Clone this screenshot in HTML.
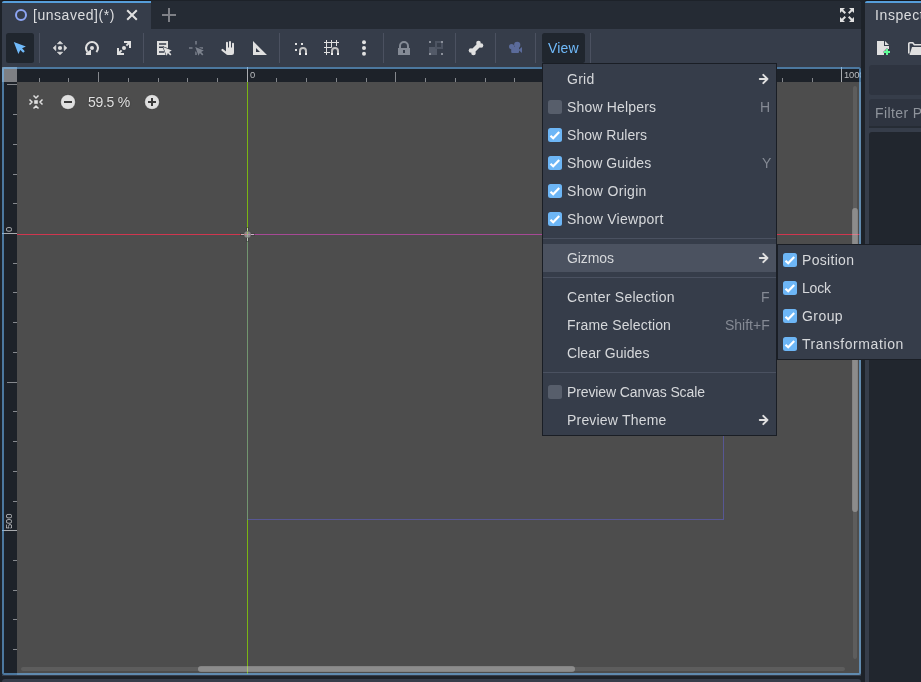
<!DOCTYPE html>
<html>
<head>
<meta charset="utf-8">
<title>Godot Editor - View Menu</title>
<style>
*{box-sizing:border-box;margin:0;padding:0}
html,body{width:921px;height:682px;overflow:hidden;background:#1d2229}
.t,.lb,.sc,.rl{will-change:transform}
body{position:relative;font-family:"Liberation Sans",sans-serif;font-size:14px;color:#dcdddf;line-height:16px}
.abs{position:absolute}
.t{position:absolute;white-space:pre;line-height:16px;height:16px}
svg{position:absolute;overflow:visible}
.ic{width:16px;height:16px}
.sep{position:absolute;width:1px;top:33px;height:30px;background:#4b5160}
/* center panel */
#center{left:2px;top:1px;width:859px;height:675px;background:#363d4a;border-radius:3px 3px 0 0}
#tabbar{left:2px;top:1px;width:859px;height:28px;background:#252b34;border-radius:3px 3px 0 0}
#tab{left:2px;top:1px;width:149px;height:28px;background:#363d4a;border-top:2px solid #569eda;border-radius:2px 0 0 0}
.btnp{position:absolute;background:#20262e;border-radius:2.5px}
/* viewport */
#canvas{left:2px;top:67px;width:859px;height:608px;background:#4d4d4d;border-radius:2px}
#rulh{left:2px;top:67px;width:859px;height:15px;background:#1d2229}
#rulv{left:2px;top:67px;width:15px;height:608px;background:#1d2229}
#corner{left:2px;top:67px;width:15px;height:15px;background:#7e8084}
#focus{left:2px;top:67px;width:859px;height:608px;border:2px solid rgba(112,186,250,.57);border-radius:2px}
.tk{position:absolute;background:#7e8186}
.rl{position:absolute;letter-spacing:-.1px;font-size:9.4px;line-height:10px;color:#babcbf;white-space:pre}
/* popup */
.pop{position:absolute;background:#363d4a;border:1px solid #1a1e25}
.mi{position:absolute;left:0;right:0;height:28px}
.mi .lb{position:absolute;left:24px;top:6px;line-height:16px;white-space:pre;color:#d6d8db}
.mi .sc{position:absolute;right:6px;top:6px;line-height:16px;white-space:pre;color:#858a94}
.msep{position:absolute;left:0;right:0;height:1px;background:#4a5160}
.cb{position:absolute;width:14px;height:14px;border-radius:2.5px;top:7px;left:5px;background:#575e6b}
.cb.on{background:#6db6f6}
.cb svg{left:0;top:0;width:14px;height:14px}
.arr{left:213px;top:6px}
</style>
</head>
<body>
<!-- CENTER PANEL -->
<div class="abs" id="center"></div>
<div class="abs" id="tabbar"></div>
<div class="abs" id="tab"></div>
<div class="abs" style="left:2px;top:0;width:149px;height:1px;background:#15181d"></div>
<div class="abs" style="left:865px;top:0;width:56px;height:1px;background:#15181d"></div>
<svg class="ic" style="left:13px;top:7px" viewBox="0 0 16 16"><circle cx="8" cy="8" r="5" fill="none" stroke="#8da5f3" stroke-width="2"/></svg>
<span class="t" id="tabtxt" style="left:32.5px;top:7px;color:#dcdddf;letter-spacing:.53px">[unsaved](*)</span>
<svg class="ic" style="left:124px;top:7px" viewBox="0 0 16 16"><path d="M3.2 3.2l9.6 9.6M12.8 3.2l-9.6 9.6" stroke="#e0e0e0" stroke-width="2" stroke-linecap="butt" fill="none"/></svg>
<svg class="ic" style="left:161px;top:7px" viewBox="0 0 16 16"><path d="M8 1v14M1 8h14" stroke="#7e8086" stroke-width="2" fill="none"/></svg>
<svg class="ic" id="distfree" style="left:839px;top:7px" viewBox="0 0 16 16"><path fill="#e0e0e0" d="M1 1v5l1.8-1.8L5.6 7 7 5.6 4.2 2.8 6 1zM10 1l1.8 1.8L9 5.6 10.4 7l2.8-2.8L15 6V1zM5.6 9L2.8 11.8 1 10v5h5l-1.8-1.8L7 10.4zM10.4 9L9 10.4l2.800 2.800L10 15h5v-5l-1.800 1.800z"/></svg>

<!-- TOOLBAR -->
<div class="btnp" style="left:6px;top:33px;width:28px;height:30px"></div>
<div class="sep" style="left:39px"></div>
<div class="sep" style="left:143px"></div>
<div class="sep" style="left:279px"></div>
<div class="sep" style="left:383px"></div>
<div class="sep" style="left:455px"></div>
<div class="sep" style="left:495px"></div>
<div class="sep" style="left:535px"></div>
<div class="sep" style="left:590px"></div>
<div class="btnp" style="left:542px;top:33px;width:43px;height:30px"></div>
<span class="t" id="viewtxt" style="left:547.5px;top:40px;color:#70bafa;letter-spacing:.15px">View</span>
<!--ICONS-->
<svg class="ic" style="left:12px;top:40px" viewBox="0 0 16 16"><path d="M1.800 2L13.900 6.400 10.100 8.300 12.800 11.200 11.200 12.800 8.300 10.100 6.400 13.900Z" fill="#70bafa"/></svg>
<svg class="ic" style="left:52px;top:40px" viewBox="0 0 16 16"><g fill="#e0e0e0" stroke="#e0e0e0" stroke-width=".7" stroke-linejoin="round"><path d="M8 1.200L10.600 3.800H5.400Z"/><path d="M8 14.800L10.600 12.200H5.400Z"/><path d="M1.200 8L3.800 5.400V10.600Z"/><path d="M14.800 8L12.200 5.400V10.600Z"/></g><circle cx="8" cy="8" r="2.100" fill="#e0e0e0"/></svg>
<svg class="ic" style="left:84px;top:40px" viewBox="0 0 16 16"><path d="M12.400 12.100A6 6 0 1 0 3.500 12" fill="none" stroke="#e0e0e0" stroke-width="2.100"/><circle cx="8" cy="8" r="2" fill="#e0e0e0"/><path d="M1.900 13.200L6 10.100H7V15H1.900Z" fill="#e0e0e0"/></svg>
<svg class="ic" style="left:116px;top:40px" viewBox="0 0 16 16"><g fill="#e0e0e0"><path d="M8 1h7v7h-2V3H8z"/><path d="M1 8v7h7v-2H3V8z"/><circle cx="8" cy="8" r="2"/></g><path d="M14 2L10.400 5.600M2 14L5.600 10.400" stroke="#e0e0e0" stroke-width="2" fill="none"/></svg>
<svg class="ic" style="left:156px;top:40px" viewBox="0 0 16 16"><path d="M1 1h11v14H1z" fill="#e0e0e0"/><path d="M3 3.300h7.200v1.400H3zM3 6.500h5v1.400H3zM3 11.300h5v1.400H3z" fill="#363d4a"/><path d="M7.300 7.100L15.800 10.400 13.100 11.900 15.400 14.200 14.200 15.400 11.900 13.100 10.500 15.800Z" fill="#e0e0e0" stroke="#363d4a" stroke-width="1.200" stroke-linejoin="round" paint-order="stroke"/></svg>
<svg class="ic" style="left:188px;top:40px" viewBox="0 0 16 16"><path d="M7 1h2v3.500H7zM1 7h3.500v2H1zM11.500 7H15v2h-3.500zM7 11.500h2V15H7z" fill="#686e7a"/><path d="M7.300 7.100L15.800 10.400 13.100 11.900 15.400 14.200 14.200 15.400 11.900 13.100 10.500 15.800Z" fill="#7c828d" stroke="#363d4a" stroke-width="1.200" stroke-linejoin="round" paint-order="stroke"/></svg>
<svg class="ic" style="left:220px;top:40px" viewBox="0 0 16 16"><path d="M6 8.500V2.800a1 1 0 0 1 2 0V7.500h1V1.900a1 1 0 0 1 2 0V7.500h1V3.700a1 1 0 0 1 2 0V12.500a2.500 2.500 0 0 1-2.500 2.500H7.800a2.500 2.500 0 0 1-1.900-.9L1.700 10.800a1.100 1.100 0 0 1 1.600-1.600L6 11.500z" fill="#e0e0e0"/></svg>
<svg class="ic" style="left:252px;top:40px" viewBox="0 0 16 16"><path d="M1 1V15H15ZM4 8L8 12H4Z" fill="#e0e0e0" fill-rule="evenodd"/></svg>
<svg class="ic" style="left:292px;top:40px" viewBox="0 0 16 16"><path d="M3 3h2v2H3zM9 3h2v2H9zM3 9h2v2H3z" fill="#e0e0e0"/><path d="M7 15V11a4 4 0 0 1 8 0v4h-2V11a2 2 0 0 0-4 0v4z" fill="#c2c2c2"/><path d="M7 13h2v2H7zM13 13h2v2h-2z" fill="#f2f2f2"/></svg>
<svg class="ic" style="left:324px;top:40px" viewBox="0 0 16 16"><path d="M2.500 0V15M7.500 0V7.500M12.500 0V6M0 2.500H15M0 7.500H7.500M0 12.500H6" stroke="#e0e0e0" stroke-width="1" fill="none"/><path d="M7 15V11a4 4 0 0 1 8 0v4h-2V11a2 2 0 0 0-4 0v4z" fill="#c2c2c2"/><path d="M7 13h2v2H7zM13 13h2v2h-2z" fill="#f2f2f2"/></svg>
<svg class="ic" style="left:356px;top:40px" viewBox="0 0 16 16"><g fill="#e0e0e0"><circle cx="8" cy="2.200" r="2"/><circle cx="8" cy="8" r="2"/><circle cx="8" cy="13.800" r="2"/></g></svg>
<svg class="ic" style="left:396px;top:40px" viewBox="0 0 16 16"><path d="M2 8h1V6a5 5 0 0 1 10 0v2h1v7H2zM5 8h6V6a3 3 0 0 0-6 0zM7 10v3h2v-3z" fill="#848a95" fill-rule="evenodd"/></svg>
<svg class="ic" style="left:428px;top:40px" viewBox="0 0 16 16"><path d="M1 7h8v8H1z" fill="#535a68"/><path d="M8 2h6v6H8z" fill="none" stroke="#4d5462" stroke-width="2"/><path d="M1 1h2v2H1zM13 1h2v2h-2zM1 13h2v2H1zM13 13h2v2h-2z" fill="#8b909a"/></svg>
<svg class="ic" style="left:468px;top:40px" viewBox="0 0 16 16"><path d="M4.500 11.500L11.500 4.500" stroke="#e0e0e0" stroke-width="4.400" fill="none"/><g fill="#e0e0e0"><circle cx="10.500" cy="3" r="2.300"/><circle cx="13" cy="5.500" r="2.300"/><circle cx="3" cy="10.500" r="2.300"/><circle cx="5.500" cy="13" r="2.300"/></g></svg>
<svg class="ic" style="left:508px;top:40px" viewBox="0 0 16 16"><g fill="#5b6b9a"><circle cx="3.600" cy="6.600" r="2.600"/><circle cx="9.200" cy="4.900" r="3.100"/><rect x="3.200" y="7" width="7.800" height="6" rx="1"/><path d="M14 7V13L10.500 10Z"/></g></svg>

<!-- VIEWPORT -->
<div class="abs" id="canvas"></div>
<!--CANVASCONTENT-->
<div class="abs" style="left:17px;top:234px;width:843px;height:1px;background:#d0364f"></div>
<div class="abs" style="left:247px;top:82px;width:1px;height:592px;background:#7bb512"></div>
<div class="abs" style="left:247px;top:234px;width:477px;height:286px;border:1px solid rgba(102,102,255,.4)"></div>
<svg style="left:239px;top:226px;width:17px;height:17px" viewBox="0 0 17 17">
<g fill="rgba(40,40,40,.28)"><rect x="1" y="7" width="5" height="3"/><rect x="11" y="7" width="5" height="3"/><rect x="7" y="1" width="3" height="5"/><rect x="7" y="11" width="3" height="5"/></g>
<circle cx="8.5" cy="8.5" r="3.600" fill="rgba(200,200,200,.5)" stroke="rgba(40,40,40,.25)" stroke-width="1"/>
<g fill="rgba(255,255,255,.6)"><rect x="2" y="8" width="3" height="1"/><rect x="12" y="8" width="3" height="1"/><rect x="8" y="2" width="1" height="3"/><rect x="8" y="12" width="1" height="3"/></g>
</svg>
<div class="abs" style="left:853px;top:86px;width:4px;height:573px;background:rgba(255,255,255,.09);border-radius:2px"></div>
<div class="abs" style="left:852px;top:208px;width:6px;height:304px;background:rgba(210,210,210,.41);border-radius:3px"></div>
<div class="abs" style="left:21px;top:667px;width:824px;height:4px;background:rgba(255,255,255,.09);border-radius:2px"></div>
<div class="abs" style="left:198px;top:666px;width:377px;height:6px;background:rgba(210,210,210,.41);border-radius:3px"></div>
<svg class="ic" style="left:28px;top:94px" viewBox="0 0 16 16"><path fill="#e0e0e0" d="M6.200 6.200h3.600v3.600H6.200z"/><path d="M5.500 1.500L8 4l2.500-2.500M5.500 14.500L8 12l2.500 2.500M1.500 5.500L4 8l-2.500 2.500M14.500 5.500L12 8l2.500 2.500" stroke="#e0e0e0" stroke-width="1.500" fill="none"/></svg>
<svg class="ic" style="left:60px;top:94px" viewBox="0 0 16 16"><circle cx="8" cy="8" r="7.300" fill="#e0e0e0" stroke="rgba(0,0,0,.22)" stroke-width="1"/><path d="M4 8h8" stroke="#3a3a3a" stroke-width="2"/></svg>
<span class="t" id="zoomtxt" style="left:87.700px;top:94px;color:#e0e0e0;letter-spacing:-.3px;text-shadow:0 0 1.5px rgba(0,0,0,.55)">59.5 %</span>
<svg class="ic" style="left:144px;top:94px" viewBox="0 0 16 16"><circle cx="8" cy="8" r="7.300" fill="#e0e0e0" stroke="rgba(0,0,0,.22)" stroke-width="1"/><path d="M4 8h8M8 4v8" stroke="#3a3a3a" stroke-width="2"/></svg>
<div class="abs" id="rulh"></div>
<div class="abs" id="rulv"></div>
<!--RULERS-->
<div class="abs" style="left:0;top:0;width:861px;height:675px;overflow:hidden">
<div class="tk" style="left:39px;top:78px;width:1px;height:4px;background:#85888d"></div>
<div class="tk" style="left:68px;top:78px;width:1px;height:4px;background:#85888d"></div>
<div class="tk" style="left:98px;top:72px;width:1px;height:10px;background:#85888d"></div>
<div class="tk" style="left:128px;top:78px;width:1px;height:4px;background:#85888d"></div>
<div class="tk" style="left:158px;top:78px;width:1px;height:4px;background:#85888d"></div>
<div class="tk" style="left:187px;top:78px;width:1px;height:4px;background:#85888d"></div>
<div class="tk" style="left:217px;top:78px;width:1px;height:4px;background:#85888d"></div>
<div class="tk" style="left:247px;top:67px;width:1px;height:15px;background:#a9acb0"></div>
<span class="rl" style="left:249.6px;top:70.300px">0</span>
<div class="tk" style="left:276px;top:78px;width:1px;height:4px;background:#85888d"></div>
<div class="tk" style="left:306px;top:78px;width:1px;height:4px;background:#85888d"></div>
<div class="tk" style="left:336px;top:78px;width:1px;height:4px;background:#85888d"></div>
<div class="tk" style="left:366px;top:78px;width:1px;height:4px;background:#85888d"></div>
<div class="tk" style="left:395px;top:72px;width:1px;height:10px;background:#85888d"></div>
<div class="tk" style="left:425px;top:78px;width:1px;height:4px;background:#85888d"></div>
<div class="tk" style="left:455px;top:78px;width:1px;height:4px;background:#85888d"></div>
<div class="tk" style="left:485px;top:78px;width:1px;height:4px;background:#85888d"></div>
<div class="tk" style="left:514px;top:78px;width:1px;height:4px;background:#85888d"></div>
<div class="tk" style="left:544px;top:67px;width:1px;height:15px;background:#a9acb0"></div>
<span class="rl" style="left:546.6px;top:70.300px">500</span>
<div class="tk" style="left:574px;top:78px;width:1px;height:4px;background:#85888d"></div>
<div class="tk" style="left:603px;top:78px;width:1px;height:4px;background:#85888d"></div>
<div class="tk" style="left:633px;top:78px;width:1px;height:4px;background:#85888d"></div>
<div class="tk" style="left:663px;top:78px;width:1px;height:4px;background:#85888d"></div>
<div class="tk" style="left:693px;top:72px;width:1px;height:10px;background:#85888d"></div>
<div class="tk" style="left:722px;top:78px;width:1px;height:4px;background:#85888d"></div>
<div class="tk" style="left:752px;top:78px;width:1px;height:4px;background:#85888d"></div>
<div class="tk" style="left:782px;top:78px;width:1px;height:4px;background:#85888d"></div>
<div class="tk" style="left:812px;top:78px;width:1px;height:4px;background:#85888d"></div>
<div class="tk" style="left:841px;top:67px;width:1px;height:15px;background:#a9acb0"></div>
<span class="rl" style="left:843.6px;top:70.300px">1000</span>
<div class="tk" style="left:7px;top:84px;width:10px;height:1px;background:#85888d"></div>
<div class="tk" style="left:13px;top:114px;width:4px;height:1px;background:#85888d"></div>
<div class="tk" style="left:13px;top:144px;width:4px;height:1px;background:#85888d"></div>
<div class="tk" style="left:13px;top:174px;width:4px;height:1px;background:#85888d"></div>
<div class="tk" style="left:13px;top:203px;width:4px;height:1px;background:#85888d"></div>
<div class="tk" style="left:2px;top:233px;width:15px;height:1px;background:#a9acb0"></div>
<span class="rl" style="left:4px;top:232px;transform-origin:0 0;transform:rotate(-90deg)">0</span>
<div class="tk" style="left:13px;top:263px;width:4px;height:1px;background:#85888d"></div>
<div class="tk" style="left:13px;top:292px;width:4px;height:1px;background:#85888d"></div>
<div class="tk" style="left:13px;top:322px;width:4px;height:1px;background:#85888d"></div>
<div class="tk" style="left:13px;top:352px;width:4px;height:1px;background:#85888d"></div>
<div class="tk" style="left:7px;top:382px;width:10px;height:1px;background:#85888d"></div>
<div class="tk" style="left:13px;top:411px;width:4px;height:1px;background:#85888d"></div>
<div class="tk" style="left:13px;top:441px;width:4px;height:1px;background:#85888d"></div>
<div class="tk" style="left:13px;top:471px;width:4px;height:1px;background:#85888d"></div>
<div class="tk" style="left:13px;top:501px;width:4px;height:1px;background:#85888d"></div>
<div class="tk" style="left:2px;top:530px;width:15px;height:1px;background:#a9acb0"></div>
<span class="rl" style="left:4px;top:529px;transform-origin:0 0;transform:rotate(-90deg)">500</span>
<div class="tk" style="left:13px;top:560px;width:4px;height:1px;background:#85888d"></div>
<div class="tk" style="left:13px;top:590px;width:4px;height:1px;background:#85888d"></div>
<div class="tk" style="left:13px;top:619px;width:4px;height:1px;background:#85888d"></div>
<div class="tk" style="left:13px;top:649px;width:4px;height:1px;background:#85888d"></div>
</div>
<div class="abs" id="corner"></div>
<div class="abs" id="focus"></div>

<!-- BOTTOM PANEL -->
<div class="abs" style="left:2px;top:679px;width:859px;height:10px;background:#363d4a;border-radius:3px 3px 0 0"></div>

<!-- RIGHT PANEL -->
<div class="abs" style="left:865px;top:1px;width:70px;height:690px;background:#363d4a;border-top:2px solid #569eda;border-radius:2px 0 0 0"></div>
<span class="t" id="insptxt" style="letter-spacing:.6px;left:875.3px;top:7px;color:#dcdddf">Inspector</span>
<div class="abs" style="left:869px;top:65px;width:70px;height:30px;background:#2e3440;border-radius:3px"></div>
<div class="abs" style="left:869px;top:99px;width:70px;height:29px;background:#2e3440;border-bottom:2px solid #262c35;border-radius:3px 3px 0 0"></div>
<span class="t" id="filttxt" style="letter-spacing:.4px;left:875.1px;top:105px;color:#8f949c">Filter Properties</span>
<div class="abs" style="left:869px;top:132px;width:70px;height:560px;background:#21262e;border-radius:3px"></div>
<!--RIGHTICONS-->
<svg class="ic" style="left:876px;top:40px" viewBox="0 0 16 16"><path d="M1 1H8V6H13V9H10V11H8V15H1Z" fill="#e0e0e0"/><path d="M9 1L13 5H9Z" fill="#e0e0e0"/><path d="M10 9h2v2h2v2h-2v2h-2v-2H8v-2h2z" fill="#5fff97" stroke="#363d4a" stroke-width=".6" paint-order="stroke"/></svg>
<svg class="ic" style="left:907px;top:40px" viewBox="0 0 16 16"><path d="M1.800 13.500V3.800a1 1 0 0 1 1-1H5.800l1.500 2H14" fill="none" stroke="#e0e0e0" stroke-width="1.600"/><path d="M5 7H17L15 15H2.500Z" fill="#e0e0e0"/></svg>

<!-- POPUPS -->
<!--POPUPS-->
<div class="pop" id="pop1" style="left:542px;top:63px;width:235px;height:373px">
<div class="mi" style="top:1px"><span class="lb" style="letter-spacing:0.27px">Grid</span><svg class="ic arr" viewBox="0 0 16 16"><path d="M3.800 8H11.400M7.300 3.900L11.400 8 7.300 12.100" stroke="#e0e0e0" stroke-width="2" fill="none" stroke-linecap="round" stroke-linejoin="round"/></svg></div>
<div class="mi" style="top:29px"><div class="cb"></div><span class="lb" style="letter-spacing:0.17px">Show Helpers</span><span class="sc">H</span></div>
<div class="mi" style="top:57px"><div class="cb on"><svg viewBox="0 0 14 14"><path d="M2.500 7.700l2.700 2.600 6-6.300" stroke="#fff" stroke-width="2.200" fill="none"/></svg></div><span class="lb" style="letter-spacing:0.07px">Show Rulers</span></div>
<div class="mi" style="top:85px"><div class="cb on"><svg viewBox="0 0 14 14"><path d="M2.500 7.700l2.700 2.600 6-6.300" stroke="#fff" stroke-width="2.200" fill="none"/></svg></div><span class="lb" style="letter-spacing:0.09px">Show Guides</span><span class="sc" style="right:5px">Y</span></div>
<div class="mi" style="top:113px"><div class="cb on"><svg viewBox="0 0 14 14"><path d="M2.500 7.700l2.700 2.600 6-6.300" stroke="#fff" stroke-width="2.200" fill="none"/></svg></div><span class="lb" style="letter-spacing:0.31px">Show Origin</span></div>
<div class="mi" style="top:141px"><div class="cb on"><svg viewBox="0 0 14 14"><path d="M2.500 7.700l2.700 2.600 6-6.300" stroke="#fff" stroke-width="2.200" fill="none"/></svg></div><span class="lb" style="letter-spacing:0.27px">Show Viewport</span></div>
<div class="msep" style="top:174px"></div>
<div class="mi" style="top:180px;background:#4b5260"><span class="lb" style="letter-spacing:-0.08px">Gizmos</span><svg class="ic arr" viewBox="0 0 16 16"><path d="M3.800 8H11.400M7.300 3.900L11.400 8 7.300 12.100" stroke="#e0e0e0" stroke-width="2" fill="none" stroke-linecap="round" stroke-linejoin="round"/></svg></div>
<div class="msep" style="top:213px"></div>
<div class="mi" style="top:219px"><span class="lb" style="letter-spacing:0.27px">Center Selection</span><span class="sc">F</span></div>
<div class="mi" style="top:247px"><span class="lb" style="letter-spacing:0.14px">Frame Selection</span><span class="sc">Shift+F</span></div>
<div class="mi" style="top:275px"><span class="lb" style="letter-spacing:0.07px">Clear Guides</span></div>
<div class="msep" style="top:308px"></div>
<div class="mi" style="top:314px"><div class="cb"></div><span class="lb" style="letter-spacing:-0.11px">Preview Canvas Scale</span></div>
<div class="mi" style="top:342px"><span class="lb" style="letter-spacing:0.19px">Preview Theme</span><svg class="ic arr" viewBox="0 0 16 16"><path d="M3.800 8H11.400M7.300 3.900L11.400 8 7.300 12.100" stroke="#e0e0e0" stroke-width="2" fill="none" stroke-linecap="round" stroke-linejoin="round"/></svg></div>
</div>
<div class="pop" id="pop2" style="left:777px;top:244px;width:160px;height:116px">
<div class="mi" style="top:1px"><div class="cb on"><svg viewBox="0 0 14 14"><path d="M2.500 7.700l2.700 2.600 6-6.300" stroke="#fff" stroke-width="2.200" fill="none"/></svg></div><span class="lb" style="letter-spacing:0.31px">Position</span></div>
<div class="mi" style="top:29px"><div class="cb on"><svg viewBox="0 0 14 14"><path d="M2.500 7.700l2.700 2.600 6-6.300" stroke="#fff" stroke-width="2.200" fill="none"/></svg></div><span class="lb" style="letter-spacing:-0.2px">Lock</span></div>
<div class="mi" style="top:57px"><div class="cb on"><svg viewBox="0 0 14 14"><path d="M2.500 7.700l2.700 2.600 6-6.300" stroke="#fff" stroke-width="2.200" fill="none"/></svg></div><span class="lb" style="letter-spacing:0.43px">Group</span></div>
<div class="mi" style="top:85px"><div class="cb on"><svg viewBox="0 0 14 14"><path d="M2.500 7.700l2.700 2.600 6-6.300" stroke="#fff" stroke-width="2.200" fill="none"/></svg></div><span class="lb" style="letter-spacing:0.59px">Transformation</span></div>
</div>
</body>
</html>
